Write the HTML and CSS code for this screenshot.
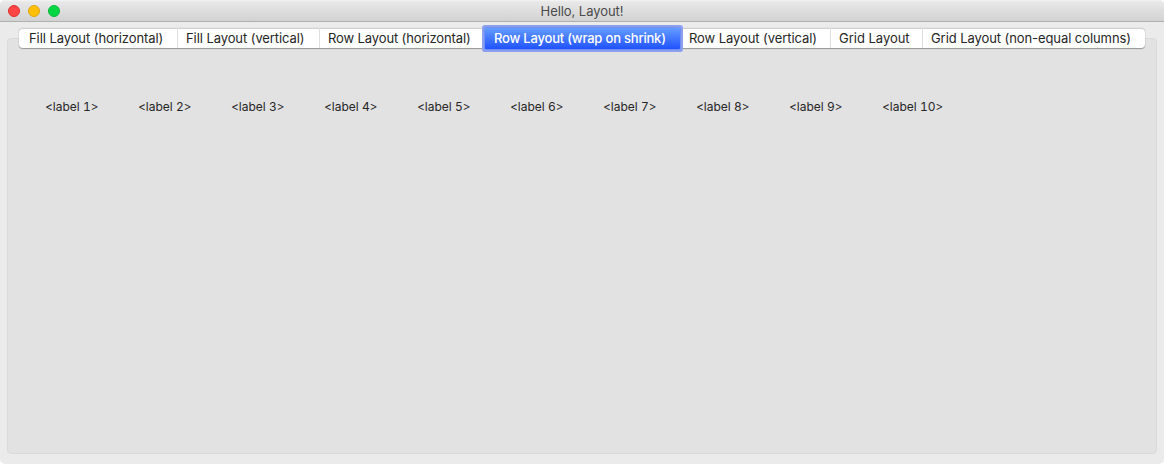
FILE: index.html
```
<!DOCTYPE html>
<html lang="en">
<head>
<meta charset="utf-8">
<title>Hello, Layout!</title>
<link rel="stylesheet" href="styles.css">
</head>
<body>
<div class="window">
  <header class="titlebar">
    <div class="lights"><span class="light close"></span><span class="light minimize"></span><span class="light maximize"></span></div>
    <h1 class="title">Hello, Layout!</h1>
  </header>
  <main class="panel">
    <nav class="tabs">
      <button class="tab fill-h"><span>Fill Layout (horizontal)</span></button>
      <button class="tab fill-v"><span>Fill Layout (vertical)</span></button>
      <button class="tab row-h"><span>Row Layout (horizontal)</span></button>
      <button class="tab row-wrap selected"><span>Row Layout (wrap on shrink)</span></button>
      <button class="tab row-v"><span>Row Layout (vertical)</span></button>
      <button class="tab grid"><span>Grid Layout</span></button>
      <button class="tab grid-ne"><span>Grid Layout (non-equal columns)</span></button>
    </nav>
    <div class="labels">
      <span>&lt;label 1&gt;</span>
      <span>&lt;label 2&gt;</span>
      <span>&lt;label 3&gt;</span>
      <span>&lt;label 4&gt;</span>
      <span>&lt;label 5&gt;</span>
      <span>&lt;label 6&gt;</span>
      <span>&lt;label 7&gt;</span>
      <span>&lt;label 8&gt;</span>
      <span>&lt;label 9&gt;</span>
      <span>&lt;label 10&gt;</span>
    </div>
  </main>
</div>
</body>
</html>
```
FILE: styles.css
```
* { box-sizing: border-box; }
body {
  margin: 0;
  background: #fff;
  font-family: Inter, "Liberation Sans", sans-serif;
  color: #262626;
}
.window {
  display: flex;
  flex-direction: column;
  height: 464px;
  border-radius: 5px;
  overflow: hidden;
  background: #ebebeb;
}
.titlebar {
  display: grid;
  grid-template-columns: 120px 1fr 120px;
  align-items: center;
  flex: none;
  height: 22px;
  border-bottom: 1px solid #b0b0b0;
  background: linear-gradient(#f5f5f5 0, #e8e8e8 2px, #d2d2d2);
}
.lights { display: flex; gap: 8px; padding-left: 8px; }
.light { width: 12px; height: 12px; border-radius: 50%; border: 1px solid; }
.close { background: #ff4645; border-color: #e0302f; }
.minimize { background: #ffbf05; border-color: #e0a510; }
.maximize { background: #00d742; border-color: #06b83a; }
.title {
  margin: 0;
  text-align: center;
  font-size: 13px;
  line-height: 16px;
  letter-spacing: -.06px;
  font-weight: 400;
  color: #4a4a4a;
}
.panel {
  flex: 1;
  margin: 16px 7px 10px;
  border: 1px solid #dadada;
  border-radius: 4px;
  background: #e2e2e2;
}
.tabs {
  display: flex;
  width: 1126px;
  height: 20px;
  margin: -11px 0 0 11px;
  border-radius: 4px;
  background: #fff;
  box-shadow: inset 0 1px 0 #d0d0d0, 0 0 1px #a8a8a8, 0 1px 1px #969696;
}
.tab {
  flex: none;
  margin: 0;
  padding: 0 0 0 8px;
  border: 0;
  border-right: 1px solid #dedede;
  background: none;
  font: 13px/20px Inter, "Liberation Sans", sans-serif;
  letter-spacing: -.08px;
  color: #262626;
  text-align: left;
  white-space: nowrap;
}
.fill-h { width: 159px; padding-left: 10px; }
.fill-v { width: 142px; }
.row-h { width: 165px; letter-spacing: -.12px; }
.row-wrap { width: 195px; padding-left: 9px; }
.row-v { width: 151px; padding-left: 9px; }
.grid { width: 92px; letter-spacing: -.02px; }
.grid-ne { width: 222px; border-right: 0; }
.tab.selected {
  z-index: 1;
  height: 21px;
  padding-bottom: 1px;
  border-right: 0;
  color: #fff;
  font-weight: 500;
  letter-spacing: -.2px;
  background: linear-gradient(#649cff, #2053ff);
  box-shadow: 0 0 0 1px #6f8ff5, 0 0 0 3px #8ca0ee;
  border-radius: 1px;
}
.labels {
  display: flex;
  margin: 51px 0 0 37px;
  font-size: 12px;
  line-height: 16px;
  font-variant-numeric: tabular-nums;
}
.labels span { width: 93px; white-space: nowrap; }
```
